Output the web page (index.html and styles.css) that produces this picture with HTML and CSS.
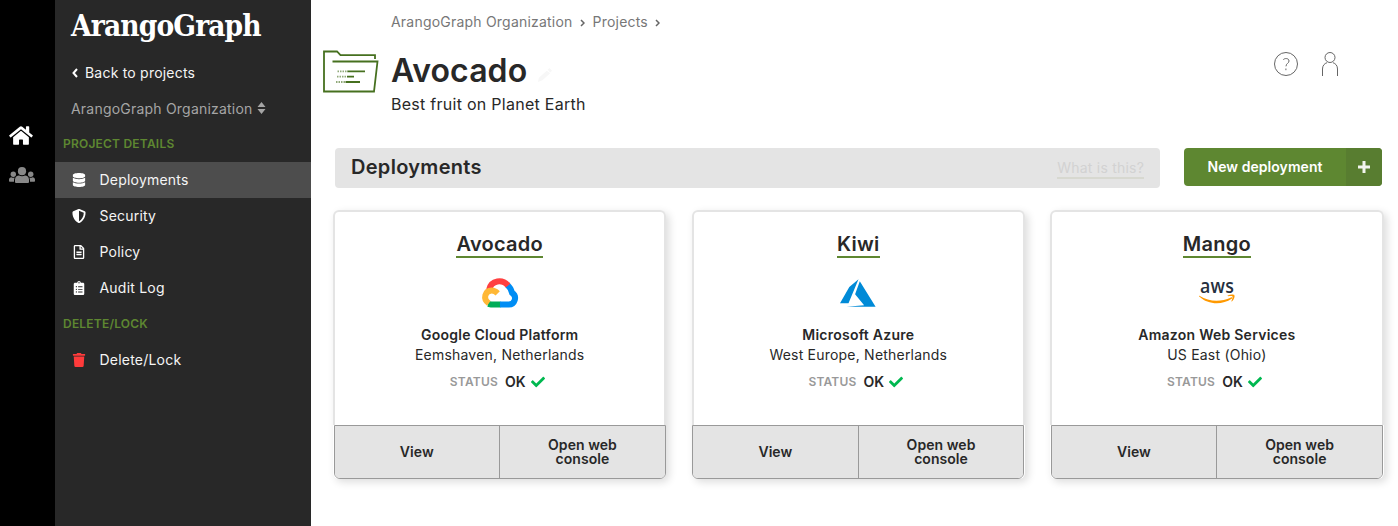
FILE: index.html
```html
<!DOCTYPE html>
<html lang="en">
<head>
<meta charset="utf-8">
<title>Avocado - ArangoGraph</title>
<link rel="stylesheet" href="styles.css">
</head>
<body>
<svg class="defs" width="0" height="0">
  <symbol id="check" viewBox="0 0 512 512"><path d="M173.9 439.4L7.500 273c-10-10-10-26.200 0-36.200l36.200-36.200c10-10 26.200-10 36.200 0L192 312.700 432.100 72.600c10-10 26.200-10 36.200 0l36.200 36.200c10 10 10 26.200 0 36.200L210.100 439.400c-10 10-26.200 10-36.200 0z"/></symbol>
</svg>
<div class="app">
  <nav class="rail">
    <svg class="rail-home" viewBox="0 0 576 512"><path d="M280.37 148.26L96 300.11V464a16 16 0 0 0 16 16l112.06-.29a16 16 0 0 0 15.92-16V368a16 16 0 0 1 16-16h64a16 16 0 0 1 16 16v95.64a16 16 0 0 0 16 16.05L464 480a16 16 0 0 0 16-16V300L295.67 148.26a12.19 12.19 0 0 0-15.3 0zM571.6 251.47L488 182.56V44.05a12 12 0 0 0-12-12h-56a12 12 0 0 0-12 12v72.61L318.47 43a48 48 0 0 0-61 0L4.34 251.47a12 12 0 0 0-1.6 16.9l25.5 31A12 12 0 0 0 45.15 301l235.22-193.74a12.19 12.19 0 0 1 15.3 0L530.9 301a12 12 0 0 0 16.9-1.6l25.5-31a12 12 0 0 0-1.7-16.93z"/></svg>
    <svg class="rail-users" viewBox="0 0 26 16"><circle cx="13" cy="4.200" r="4.100"/><circle cx="4.300" cy="7.200" r="2.700"/><circle cx="21.700" cy="7.200" r="2.700"/><path d="M6 15v-2.500C6 10 8 8.600 10 8.600c2 1 4 1 6 0 2 0 4 1.400 4 3.900V15a1 1 0 0 1-1 1H7a1 1 0 0 1-1-1zM0 14v-1.200c0-1.500 1-2.600 2.300-2.600 1.200.6 2.700.6 3.500.3-.5.800-.8 1.800-.8 4.200H.7A.7.7 0 0 1 0 14zM26 14v-1.200c0-1.500-1-2.600-2.300-2.600-1.200.6-2.700.6-3.500.3.5.8.8 1.800.8 4.200h4.300a.7.7 0 0 0 .7-.7z"/></svg>
  </nav>
  <aside class="side">
    <div class="logo"><span>ArangoGraph</span></div>
    <a class="back"><svg viewBox="0 0 6 10"><path d="M5 1L1.500 5 5 9"/></svg>Back to projects</a>
    <a class="org">ArangoGraph Organization<svg viewBox="0 0 8 12"><path d="M4 0L8 5H0zM0 7h8L4 12z"/></svg></a>
    <h3 class="group">PROJECT DETAILS</h3>
    <a class="item active"><svg viewBox="0 0 448 512"><path d="M448 73.143v45.714C448 159.143 347.667 192 224 192S0 159.143 0 118.857V73.143C0 32.857 100.333 0 224 0s224 32.857 224 73.143zM448 176v102.857C448 319.143 347.667 352 224 352S0 319.143 0 278.857V176c48.125 33.143 136.208 48.572 224 48.572S399.874 209.143 448 176zm0 160v102.857C448 479.143 347.667 512 224 512S0 479.143 0 438.857V336c48.125 33.143 136.208 48.572 224 48.572S399.874 369.143 448 336z"/></svg>Deployments</a>
    <a class="item"><svg viewBox="0 0 512 512"><path d="M466.500 83.700l-192-80a48.150 48.150 0 0 0-36.900 0l-192 80C27.700 91.100 16 108.600 16 128c0 198.500 114.500 335.700 221.500 380.300 11.800 4.900 25.100 4.900 36.900 0C360.100 472.600 496 349.300 496 128c0-19.400-11.700-36.900-29.500-44.300zM256.100 446.300l-.1-381 175.900 73.300c-3.300 151.400-82.100 261.100-175.800 307.700z"/></svg>Security</a>
    <a class="item"><svg viewBox="0 0 384 512"><path d="M288 248v28c0 6.600-5.400 12-12 12H108c-6.600 0-12-5.400-12-12v-28c0-6.600 5.400-12 12-12h168c6.600 0 12 5.400 12 12zm-12 72H108c-6.600 0-12 5.400-12 12v28c0 6.600 5.400 12 12 12h168c6.600 0 12-5.400 12-12v-28c0-6.600-5.400-12-12-12zm108-188.100V464c0 26.500-21.500 48-48 48H48c-26.500 0-48-21.500-48-48V48C0 21.500 21.500 0 48 0h204.100C264.800 0 277 5.100 286 14.100L369.900 98c9 8.900 14.100 21.200 14.100 33.900zm-128-80V128h76.100L256 51.900zM336 464V176H232c-13.300 0-24-10.700-24-24V48H48v416h288z"/></svg>Policy</a>
    <a class="item"><svg viewBox="0 0 384 512"><path fill-rule="evenodd" d="M336 64h-80c0-35.300-28.700-64-64-64s-64 28.700-64 64H48C21.500 64 0 85.500 0 112v352c0 26.500 21.500 48 48 48h288c26.500 0 48-21.500 48-48V112c0-26.500-21.500-48-48-48zM96 424a24 24 0 1 1 0-48 24 24 0 0 1 0 48zm0-96a24 24 0 1 1 0-48 24 24 0 0 1 0 48zm0-96a24 24 0 1 1 0-48 24 24 0 0 1 0 48zm96-192a24 24 0 1 1 0 48 24 24 0 0 1 0-48zM160 384h160v32H160zM160 288h160v32H160zM160 192h160v32H160z"/></svg>Audit Log</a>
    <h3 class="group">DELETE/LOCK</h3>
    <a class="item"><svg class="danger" viewBox="0 0 448 512"><path d="M432 32H312l-9.400-18.700A24 24 0 0 0 281.100 0H166.800a23.720 23.720 0 0 0-21.400 13.300L136 32H16A16 16 0 0 0 0 48v32a16 16 0 0 0 16 16h416a16 16 0 0 0 16-16V48a16 16 0 0 0-16-16zM53.200 467a48 48 0 0 0 47.900 45h245.800a48 48 0 0 0 47.900-45L416 128H32z"/></svg>Delete/Lock</a>
  </aside>
  <main class="main">
    <header class="head">
      <svg class="folder" viewBox="0 0 56 44"><path d="M52 9V5.200H17.500L14 1.500H1V41.500H51L54.500 11.500H9.500"/><path d="M24.500 21.300H42M24 26.600H31M22.500 32H37"/><path stroke-dasharray="1.500 1" stroke-opacity=".6" d="M14.500 21.300H25M14 26.600H24M13 32H23"/></svg>
      <div class="heading">
        <div class="crumbs"><span>ArangoGraph Organization</span><svg viewBox="0 0 5 8"><path d="M1 1l3 3-3 3"/></svg><span>Projects</span><svg viewBox="0 0 5 8"><path d="M1 1l3 3-3 3"/></svg></div>
        <h1>Avocado<svg viewBox="0 0 16 16"><path d="M0 16l1-5 9-8 4 3-9 8zM11 2l2-2 3 3-2 2z"/></svg></h1>
        <p>Best fruit on Planet Earth</p>
      </div>
      <div class="tools">
        <svg class="help" viewBox="0 0 24 24"><circle cx="12" cy="12" r="11.500"/><path d="M9.200 7.800C10.400 6 15 5.900 15 9c0 2.300-3 2.400-3 5.300M11.900 16.500v1.700"/></svg>
        <svg class="person" viewBox="0 0 18 24"><circle cx="9" cy="5.500" r="5"/><path d="M1.500 24v-7c0-3.500 2-5.500 4.500-6.300M16.500 24v-7c0-3.500-2-5.500-4.500-6.300"/></svg>
      </div>
    </header>
    <div class="bar">
      <div class="title"><h2>Deployments</h2><a>What is this?</a></div>
      <button class="new"><span>New deployment</span><i><svg viewBox="0 0 12 12"><path d="M6 0v12M0 6h12"/></svg></i></button>
    </div>
    <section class="cards">
      <article class="card">
        <div class="body">
          <h4>Avocado</h4>
          <svg class="provider" viewBox="0 0 36 30"><g fill="none" stroke-width="6"><path stroke="#00ac57" d="M6 25.900l3 .6h9.500"/><path stroke="#008df4" d="M18 26.500h8.500a6.300 6.300 0 0 0 3.600-11.600C29 11 27.600 8.800 25.200 6.800"/><path stroke="#ff4040" d="M7.200 11.500C9.300 2 20.500.8 26 7.600"/><path stroke="#ffb836" d="M6.800 25.400C.5 21 3 12.500 9.700 12.500c2.700 0 4 .8 6 2.800"/></g></svg>
          <strong>Google Cloud Platform</strong>
          <span class="region">Eemshaven, Netherlands</span>
          <div class="status"><small>STATUS</small><b>OK</b><svg><use href="#check"/></svg></div>
        </div>
        <div class="actions"><button>View</button><button>Open web<br>console</button></div>
      </article>
      <article class="card">
        <div class="body">
          <h4>Kiwi</h4>
          <svg class="provider" viewBox="0 0 36 30"><path fill="#008ad7" d="M18.500 1.200L9.300 9 0 25.200h8.500zM19.800 3.200l-4.700 13 9 11.100-17.500 1.500h29z"/></svg>
          <strong>Microsoft Azure</strong>
          <span class="region">West Europe, Netherlands</span>
          <div class="status"><small>STATUS</small><b>OK</b><svg><use href="#check"/></svg></div>
        </div>
        <div class="actions"><button>View</button><button>Open web<br>console</button></div>
      </article>
      <article class="card">
        <div class="body">
          <h4>Mango</h4>
          <svg class="provider" viewBox="0 0 36 30"><text x="1" y="15" textLength="34" lengthAdjust="spacingAndGlyphs" font-family="Open Sans" font-size="20" font-weight="600" fill="#252f3e">aws</text><path fill="#ff9900" d="M.4 17.700c10 6.200 21 6.500 31.600 1.800 1.300-.5 1.500.6.700 1.300C23 27.300 9 26.800.2 18.500c-.4-.5-.2-1 .2-.8zM28.700 17.600c2.400-1.300 6-1.200 6.700-.4.600 1-.3 4.400-2.300 6-.5.400-.9.100-.6-.5.700-1.700 1.400-3.700 1-4.200-.5-.6-2.800-.4-4.400-.3-.6 0-.8-.3-.4-.6z"/></svg>
          <strong>Amazon Web Services</strong>
          <span class="region">US East (Ohio)</span>
          <div class="status"><small>STATUS</small><b>OK</b><svg><use href="#check"/></svg></div>
        </div>
        <div class="actions"><button>View</button><button>Open web<br>console</button></div>
      </article>
    </section>
  </main>
</div>
</body>
</html>
```
FILE: styles.css
```css
* { box-sizing: border-box; }
body { margin: 0; font: 14px/20px Inter, "Liberation Sans", sans-serif; letter-spacing: .21px; color: #282828; background: #fff; }
h1, h2, h3, h4, p { margin: 0; }
.defs { display: none; }
.app { display: flex; height: 526px; overflow: hidden; }
.rail { width: 55px; background: #000; display: flex; flex-direction: column; padding: 125px 0 0 9px; gap: 21px; }
.rail-home { width: 24px; height: 21px; fill: #fff; }
.rail-users { width: 26px; height: 16px; fill: #888; }
.side { width: 256px; background: #282828; color: #f5f5f5; }
.logo { height: 55px; padding: 5px 0 0 16px; font: bold 30px/42px "DejaVu Serif", serif; letter-spacing: -1px; color: #fff; }
.logo span { display: inline-block; transform: scaleX(.887); transform-origin: left; white-space: nowrap; }
.back, .org { display: flex; align-items: center; height: 36px; padding-left: 16px; }
.back svg { width: 6px; height: 10px; margin: 0 7px 0 1px; fill: none; stroke: #fff; stroke-width: 2; }
.org { height: 35px; padding-top: 1px; color: #a5a5a5; }
.org svg { width: 9px; height: 12px; margin: -3px 0 0 4px; fill: #a5a5a5; }
.group { height: 36px; padding: 8px 8px 0; font-size: 12px; line-height: 20px; font-weight: 600; color: #5e8731; }
.item { display: flex; align-items: center; height: 36px; padding-left: 17px; }
.item svg { width: 14px; height: 14px; margin-right: 13.500px; fill: #fff; }
.item.active { background: #4d4d4d; }
.item .danger { fill: #ff3b3b; }
.main { flex: 1; padding: 12px 14px 0 12px; }
.head { display: flex; height: 136px; }
.folder { width: 56px; height: 44px; margin-top: 38px; fill: none; stroke: #46701f; stroke-width: 1.800; }
.heading { flex: 1; padding-left: 12px; }
.crumbs { display: flex; align-items: center; color: #777; height: 20px; }
.crumbs svg { width: 5px; height: 8px; margin: 2px 7.500px 0; fill: none; stroke: #666; stroke-width: 1.500; }
h1 { margin-top: 18px; font-size: 32px; line-height: 42px; font-weight: 600; letter-spacing: .1px; }
h1 svg { width: 14px; height: 14px; margin-left: 11px; fill: #f7f7f7; }
.heading p { font-size: 16px; line-height: 24px; letter-spacing: .27px; }
.tools { display: flex; gap: 23px; padding: 40px 45px 0 0; }
.tools svg { height: 24px; fill: none; stroke: #555; stroke-width: .9; }
.help { width: 24px; }
.person { width: 18px; }
.bar { display: flex; gap: 24px; padding: 0 2px 0 12px; }
.title { flex: 1; height: 40px; display: flex; align-items: center; justify-content: space-between; padding: 0 16px; background: #e4e4e4; border-radius: 4px; }
h2 { font-size: 20px; line-height: 24px; margin-top: -2px; font-weight: 600; letter-spacing: .3px; }
.title a { color: #d2d2d2; line-height: 18px; border-bottom: 2px solid #d7d8d0; margin-top: 2px; }
.new { width: 198px; height: 38px; display: flex; padding: 0; border: 0; border-radius: 4px; overflow: hidden; background: #5e8731; color: #fff; font: 600 14px/38px Inter, sans-serif; letter-spacing: .05px; }
.new span { flex: 1; }
.new i { width: 36px; height: 38px; display: flex; align-items: center; justify-content: center; background: #587d30; }
.new svg { width: 12px; height: 12px; fill: none; stroke: #f2f5ee; stroke-width: 3; }
.cards { display: grid; grid-template-columns: repeat(3, 333.400px); gap: 25.200px; padding: 22px 0 0 10px; }
.card { height: 269px; display: flex; flex-direction: column; border-radius: 6px; box-shadow: 3px 3px 8px rgba(0,0,0,.14); }
.body { flex: 1; display: flex; flex-direction: column; align-items: center; border: 2px solid #e4e4e4; border-bottom: 0; border-radius: 6px 6px 0 0; padding-top: 20px; }
h4 { font-size: 20px; line-height: 24px; font-weight: 600; border-bottom: 2px solid #5e8731; letter-spacing: .25px; }
.provider { width: 36px; height: 30px; margin: 20px 0 17px; overflow: visible; }
.body strong { font-weight: 600; letter-spacing: .25px; }
.status { display: flex; align-items: center; height: 20px; margin: 7px 5px 0 0; }
.status small { font-size: 12px; font-weight: 600; color: #999; }
.status b { font-weight: 600; margin: 0 5px 0 7px; letter-spacing: 0; }
.status svg { width: 14px; height: 14px; fill: #00b850; }
.actions { display: grid; grid-template-columns: 164.500px 1fr; height: 54px; margin: 0 .5px; border: 1px solid #999; border-radius: 0 0 6px 6px; overflow: hidden; }
.actions button { padding: 0; border: 0; background: #e4e4e4; color: #282828; font: 600 14px/14px Inter, sans-serif; letter-spacing: .05px; }
.actions button + button { border-left: 1px solid #999; }
```
